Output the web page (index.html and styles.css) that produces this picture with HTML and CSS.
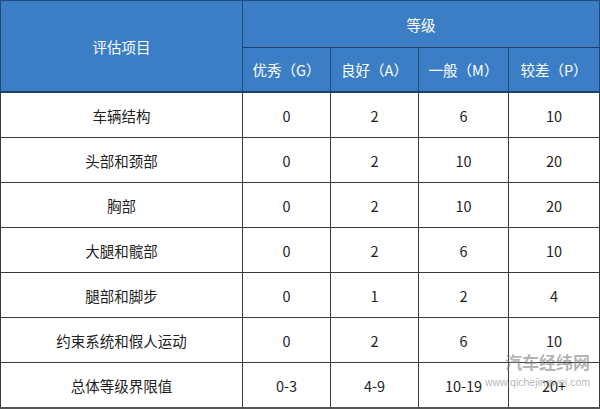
FILE: index.html
```html
<!DOCTYPE html>
<html lang="zh">
<head>
<meta charset="utf-8">
<link rel="stylesheet" href="styles.css">
</head>
<body>
<div class="wrap">
<table class="grade">
  <colgroup>
    <col class="c1"><col class="c2"><col class="c3"><col class="c4"><col class="c5">
  </colgroup>
  <thead>
    <tr class="h1">
      <th rowspan="2">评估项目</th>
      <th colspan="4">等级</th>
    </tr>
    <tr class="h2">
      <th>优秀（G）</th>
      <th>良好（A）</th>
      <th>一般（M）</th>
      <th>较差（P）</th>
    </tr>
  </thead>
  <tbody>
    <tr><td>车辆结构</td><td>0</td><td>2</td><td>6</td><td>10</td></tr>
    <tr><td>头部和颈部</td><td>0</td><td>2</td><td>10</td><td>20</td></tr>
    <tr><td>胸部</td><td>0</td><td>2</td><td>10</td><td>20</td></tr>
    <tr><td>大腿和髋部</td><td>0</td><td>2</td><td>6</td><td>10</td></tr>
    <tr><td>腿部和脚步</td><td>0</td><td>1</td><td>2</td><td>4</td></tr>
    <tr><td>约束系统和假人运动</td><td>0</td><td>2</td><td>6</td><td>10</td></tr>
    <tr><td>总体等级界限值</td><td>0-3</td><td>4-9</td><td>10-19</td><td>20+</td></tr>
  </tbody>
</table>
<div class="mark">
  <div class="mark-cn">汽车经纬网</div>
  <div class="mark-url">www.qichejingwei.com</div>
</div>
</div>
</body>
</html>
```
FILE: styles.css
```css
html, body {
  margin: 0;
  padding: 0;
  background: #ffffff;
}
.wrap {
  position: relative;
  width: 600px;
  height: 409px;
}
.grade {
  border-collapse: collapse;
  table-layout: fixed;
  width: 599px;
  font-family: "Noto Sans CJK SC", "Noto Sans", sans-serif;
  font-size: 14.5px;
  color: #1e1e1e;
}
.c1 { width: 242px; }
.c2 { width: 88px; }
.c3 { width: 88px; }
.c4 { width: 90px; }
.c5 { width: 91px; }
.grade th, .grade td {
  border: 1px solid #3a3a3a;
  text-align: center;
  vertical-align: middle;
  padding: 0;
}
.grade th {
  background: #3b7ec5;
  color: #ffffff;
  font-weight: normal;
  font-size: 14.5px;
  border-color: #1f4a78;
}
.grade thead th {
  border-bottom-color: #1f3f66;
}
.h1 th { height: 46px; }
.h2 th { height: 43px; }
.grade tbody td { height: 44px; }
.grade tbody tr:first-child td { border-top: 2px solid #1f3f66; }
.grade tbody tr:last-child td { border-bottom: 2px solid #555; }
.mark {
  position: absolute;
  left: 478px;
  top: 351px;
  width: 112px;
  text-align: right;
  color: rgba(130, 130, 130, 0.6);
  font-family: "Noto Sans CJK SC", sans-serif;
}
.mark-cn {
  font-size: 17px;
  font-weight: bold;
  line-height: 22px;
}
.mark-url {
  font-family: "Liberation Sans", sans-serif;
  font-size: 10.5px;
  line-height: 12px;
  margin-top: 3px;
}
```
